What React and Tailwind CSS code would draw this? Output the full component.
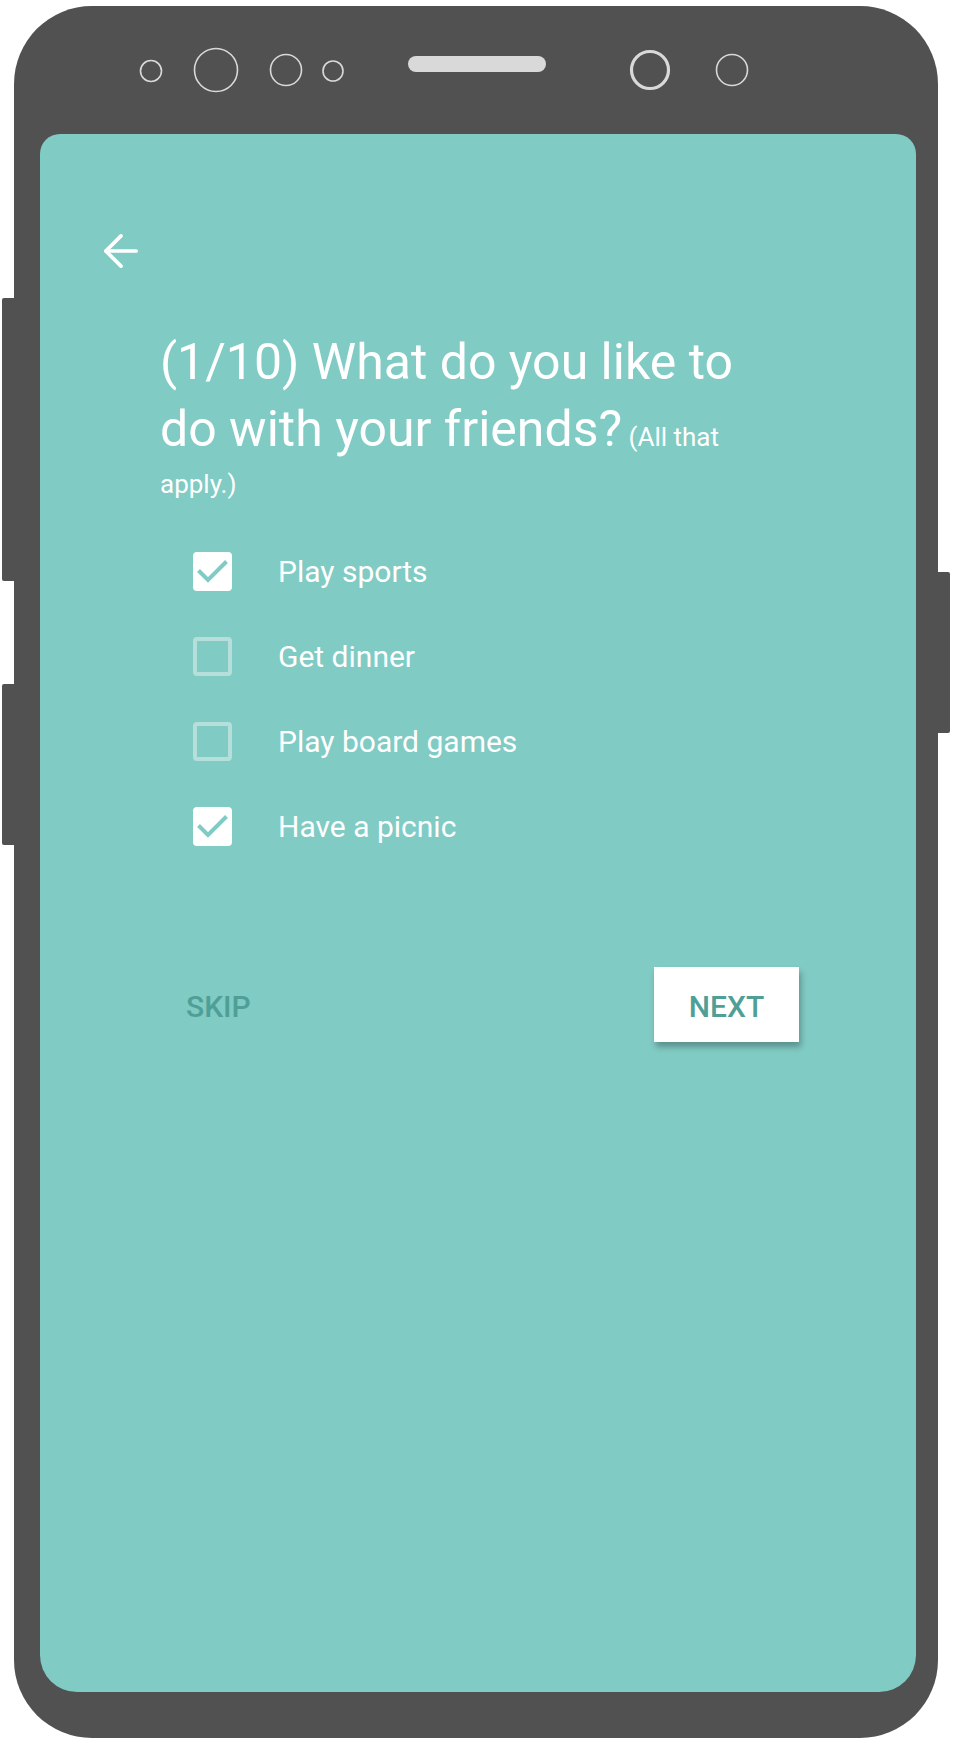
import { ArrowLeft } from 'lucide-react'

const options = [
  { label: 'Play sports', checked: true },
  { label: 'Get dinner', checked: false },
  { label: 'Play board games', checked: false },
  { label: 'Have a picnic', checked: true },
]

function Sensors() {
  // front camera / speaker drawing, coords relative to phone body
  return (
    <svg width="924" height="128" viewBox="0 0 924 128" className="block">
      <g fill="none" stroke="#d9d9d9">
        <circle cx="137" cy="65" r="10.5" strokeWidth="1.6" />
        <circle cx="202" cy="64" r="21.5" strokeWidth="1.6" />
        <circle cx="272" cy="64" r="15.5" strokeWidth="1.6" />
        <circle cx="319" cy="65" r="10" strokeWidth="1.6" />
        <circle cx="636" cy="64" r="18.5" strokeWidth="3.2" />
        <circle cx="718" cy="64" r="15.5" strokeWidth="1.6" />
      </g>
      <rect x="394" y="50" width="138" height="16" rx="8" fill="#d9d9d9" />
    </svg>
  )
}

function Checkbox({ checked }) {
  if (checked) {
    return (
      <div className="w-[39px] h-[39px] rounded-[4px] bg-white shrink-0">
        <svg width="39" height="39" viewBox="0 0 39 39">
          <polyline points="5.5,18.5 15,28 33.5,9.5" fill="none" stroke="#80cbc4" strokeWidth="4" />
        </svg>
      </div>
    )
  }
  return <div className="w-[39px] h-[39px] rounded-[4px] border-[4px] border-[#b6dfdb] shrink-0" />
}

export default function App() {
  return (
    <div className="w-[953px] h-[1741px] bg-white pt-[6px] pl-[14px]" style={{ fontFamily: 'Roboto, "Liberation Sans", sans-serif' }}>
      <div className="relative w-[924px] h-[1732px] rounded-[78px] bg-[#515151] flex flex-col">
        {/* side buttons */}
        <div className="absolute left-[-12px] top-[292px] w-[12px] h-[283px] rounded-l-[2px] bg-[#515151]" />
        <div className="absolute left-[-12px] top-[678px] w-[12px] h-[161px] rounded-l-[2px] bg-[#515151]" />
        <div className="absolute right-[-12px] top-[566px] w-[12px] h-[161px] rounded-r-[2px] bg-[#515151]" />

        <Sensors />

        <div className="ml-[26px] w-[876px] h-[1558px] bg-[#80cbc4] rounded-t-[20px] rounded-b-[37px] pt-[91px] pl-[55px]">
          <ArrowLeft size={52} strokeWidth={1.7} color="#ffffff" className="block" />

          <p className="ml-[65px] mt-[52px] w-[600px] whitespace-nowrap text-white text-[26px] leading-[43px]">
            <span className="text-[50px] leading-[67px]">(1/10) What do you like to</span>
            <br />
            <span className="text-[50px] leading-[67px]">do with your friends?</span>{' '}
            <span>(All that</span>
            <br />
            <span>apply.)</span>
          </p>

          <div className="ml-[98px] mt-[46px] flex flex-col gap-[46px]">
            {options.map((o) => (
              <div key={o.label} className="flex items-center gap-[46px]">
                <Checkbox checked={o.checked} />
                <span className="text-white text-[30px] leading-[39px]">{o.label}</span>
              </div>
            ))}
          </div>

          <div className="ml-[91px] mt-[121px] w-[613px] flex items-center justify-between">
            <span className="pt-[4px] text-[30px] font-medium text-[#4f9f97]">SKIP</span>
            <button className="w-[145px] h-[75px] pt-[4px] bg-white text-[30px] font-medium text-[#4f9f97] shadow-[2px_5px_6px_rgba(0,0,0,0.28)]">
              NEXT
            </button>
          </div>
        </div>
      </div>
    </div>
  )
}
